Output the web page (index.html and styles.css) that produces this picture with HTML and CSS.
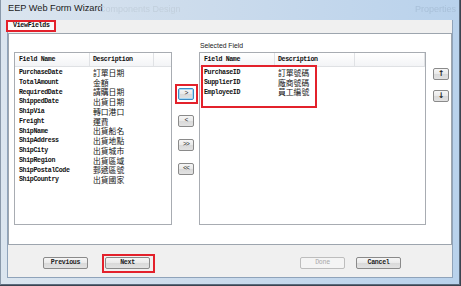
FILE: index.html
```html
<!DOCTYPE html>
<html lang="zh-Hant">

<head>
    <meta charset="UTF-8">
    <title>EEP Web Form Wizard</title>
    <link rel="stylesheet" href="styles.css">
</head>

<body>
    <div class="window">
        <div class="titlebar">
            <span class="title">EEP Web Form Wizard</span>
            <span class="ghost ghost-a">Components Design</span>
            <span class="ghost ghost-b">Properties</span>
        </div>

        <div class="client">
            <div class="tabstrip">
                <div class="tab">ViewFields</div>
            </div>

            <div class="tabpage">
                <div class="list list-left">
                    <div class="head">
                        <span class="c1">Field Name</span>
                        <span class="c2">Description</span>
                    </div>
                    <div class="rows">
                        <div class="row"><span class="c1">PurchaseDate</span><span class="c2">訂單日期</span></div>
                        <div class="row"><span class="c1">TotalAmount</span><span class="c2">金額</span></div>
                        <div class="row"><span class="c1">RequiredDate</span><span class="c2">請購日期</span></div>
                        <div class="row"><span class="c1">ShippedDate</span><span class="c2">出貨日期</span></div>
                        <div class="row"><span class="c1">ShipVia</span><span class="c2">轉口港口</span></div>
                        <div class="row"><span class="c1">Freight</span><span class="c2">運費</span></div>
                        <div class="row"><span class="c1">ShipName</span><span class="c2">出貨船名</span></div>
                        <div class="row"><span class="c1">ShipAddress</span><span class="c2">出貨地點</span></div>
                        <div class="row"><span class="c1">ShipCity</span><span class="c2">出貨城市</span></div>
                        <div class="row"><span class="c1">ShipRegion</span><span class="c2">出貨區域</span></div>
                        <div class="row"><span class="c1">ShipPostalCode</span><span class="c2">郵遞區號</span></div>
                        <div class="row"><span class="c1">ShipCountry</span><span class="c2">出貨國家</span></div>
                    </div>
                </div>

                <div class="movers">
                    <span class="mark mark-move"><button class="btn small focused">&gt;</button></span>
                    <button class="btn small">&lt;</button>
                    <button class="btn small">&gt;&gt;</button>
                    <button class="btn small">&lt;&lt;</button>
                </div>

                <div class="selected">
                    <div class="label">Selected Field</div>
                    <div class="list list-right">
                        <div class="head">
                            <span class="c1">Field Name</span>
                            <span class="c2">Description</span>
                            <span class="c3"></span>
                        </div>
                        <div class="rows">
                            <div class="row"><span class="c1">PurchaseID</span><span class="c2">訂單號碼</span></div>
                            <div class="row"><span class="c1">SupplierID</span><span class="c2">廠商號碼</span></div>
                            <div class="row"><span class="c1">EmployeeID</span><span class="c2">員工編號</span></div>
                        </div>
                        <div class="mark-box"></div>
                    </div>
                </div>

                <div class="order">
                    <button class="btn small arrow">&#8593;</button>
                    <button class="btn small arrow">&#8595;</button>
                </div>
            </div>

            <div class="footer">
                <button class="btn wide">Previous</button>
                <span class="mark mark-next"><button class="btn wide">Next</button></span>
                <span class="spacer"></span>
                <button class="btn wide" disabled>Done</button>
                <button class="btn wide cancel">Cancel</button>
            </div>
        </div>
    </div>
</body>

</html>
```

FILE: styles.css
```css
html,
body {
    margin: 0;
    padding: 0;
}

body {
    width: 461px;
    height: 286px;
    overflow: hidden;
    background: #3b4450;
}

.window {
    box-sizing: border-box;
    width: 460px;
    height: 285px;
    display: flex;
    flex-direction: column;
    padding: 0 6px 6px 6px;
    background: linear-gradient(90deg, #dbe5ef 0%, #cddcec 40%, #b9d2ec 100%);
    border-left: 1px solid #8a99aa;
    border-right: 1px solid #5b6b7d;
    border-bottom: 1px solid #5b6b7d;
}

/* title bar */
.titlebar {
    position: relative;
    height: 20px;
    flex: none;
    font-family: "Liberation Sans", sans-serif;
}

.title {
    position: absolute;
    left: 1px;
    top: 3px;
    font-size: 9.2px;
    color: #1b1b1b;
}

.ghost {
    position: absolute;
    top: 4px;
    font-size: 9px;
    color: #c2cfdc;
    filter: blur(0.6px);
}

.ghost-a {
    left: 92px;
}

.ghost-b {
    left: 408px;
    color: #a9c0d9;
}

/* client area */
.client {
    flex: 1;
    display: flex;
    flex-direction: column;
    background: #f0f0f0;
    border: 1px solid #8fa3ba;
    border-top: none;
}

.tabstrip {
    height: 13px;
    flex: none;
    display: flex;
    align-items: flex-start;
}

.tab {
    box-sizing: border-box;
    height: 12px;
    margin-left: -2px;
    padding: 0 4px 0 5px;
    background: #fafafa;
    border: 2px solid #e3212b;
    font-family: "Liberation Mono", monospace;
    font-weight: bold;
    font-size: 6.6px;
    line-height: 8px;
    letter-spacing: -0.3px;
    color: #111;
}

.tabpage {
    flex: none;
    height: 212px;
    box-sizing: border-box;
    background: #fff;
    border: 1px solid #9da5ae;
    display: flex;
    align-items: flex-start;
}

/* lists */
.list {
    position: relative;
    box-sizing: border-box;
    height: 173px;
    border: 1px solid #a8acb2;
    background: #fff;
    font-family: "Liberation Mono", "Noto Sans CJK TC", monospace;
    color: #111;
}

.list-left {
    width: 158px;
    margin: 18px 0 0 5px;
}

.list-right {
    width: 227px;
}

.head {
    display: flex;
    height: 14px;
    box-sizing: border-box;
    background: linear-gradient(#ffffff, #f3f4f6);
    border-bottom: 1px solid #dfe1e4;
    font-weight: bold;
    font-size: 6.6px;
    letter-spacing: -0.35px;
    line-height: 13px;
}

.head span {
    border-right: 1px solid #e0e2e5;
    white-space: nowrap;
    overflow: hidden;
}

.c1,
.c2,
.c3 {
    box-sizing: border-box;
    flex: none;
}

.c1 {
    width: 75px;
    padding-left: 4px;
}

.c2 {
    width: 64px;
    padding-left: 3px;
}

.list-right .c2 {
    width: 80px;
}

.c3 {
    width: 70px;
}

.rows {
    padding-top: 1px;
}

.row {
    display: flex;
    align-items: center;
    height: 9.75px;
    line-height: 9.75px;
    white-space: nowrap;
}

.row .c1 {
    font-weight: bold;
    font-size: 6.6px;
    letter-spacing: -0.35px;
}

.row .c2 {
    font-family: "Noto Sans CJK TC", sans-serif;
    font-size: 7.8px;
    line-height: 8px;
    padding-left: 3px;
}

.mark-box {
    position: absolute;
    left: 1px;
    top: 12px;
    width: 116px;
    height: 43px;
    box-sizing: border-box;
    border: 2px solid #e3212b;
}

/* red annotation frame around a control */
.mark {
    display: inline-flex;
    border: 2px solid #e3212b;
}

.mark-move {
    padding: 2px 2px 2px 1px;
    margin-bottom: -1px;
}

.mark-next {
    padding: 1px 3px 2px 1px;
    margin-left: 14px;
}

/* middle and right columns */
.movers {
    width: 27px;
    flex: none;
    display: flex;
    flex-direction: column;
    align-items: flex-start;
    gap: 12px;
    padding: 50px 0 0 3px;
    box-sizing: border-box;
}

.movers > .btn {
    margin-left: 3px;
}

.selected {
    display: flex;
    flex-direction: column;
    padding-top: 7px;
}

.label {
    height: 11px;
    padding-left: 1px;
    font-family: "Liberation Sans", sans-serif;
    font-size: 6.8px;
    line-height: 10px;
    color: #222;
}

.order {
    display: flex;
    flex-direction: column;
    gap: 10px;
    padding: 34px 0 0 7px;
}

/* buttons */
.btn {
    box-sizing: border-box;
    margin: 0;
    padding: 0;
    border: 1px solid #8a8a8a;
    border-radius: 2px;
    background: linear-gradient(#f6f6f6 0%, #e9e9e9 50%, #d9d9d9 51%, #e2e2e2 100%);
    font-family: "Liberation Mono", monospace;
    font-weight: bold;
    color: #222;
}

.small {
    width: 16px;
    height: 12px;
    font-size: 6.5px;
    line-height: 10px;
    font-weight: normal;
    letter-spacing: -0.8px;
}

.arrow {
    font-family: "DejaVu Sans", sans-serif;
    font-size: 8px;
    font-weight: bold;
    letter-spacing: 0;
}

.focused {
    border-color: #3c8cc4;
    box-shadow: inset 0 0 0 1px #a8d8f4;
}

.footer {
    flex: 1;
    display: flex;
    align-items: flex-start;
    padding: 9px 0 0 35px;
}

.footer > .btn {
    margin-top: 3px;
}

.wide {
    width: 45px;
    height: 12px;
    font-size: 6.6px;
    line-height: 10px;
    letter-spacing: -0.3px;
}

.spacer {
    flex: 1;
}

.btn:disabled {
    color: #a9a9a9;
    font-weight: normal;
    border-color: #bdbdbd;
    background: #f4f4f4;
}

.footer > .cancel {
    margin: 3px 51px 0 11px;
}
```
